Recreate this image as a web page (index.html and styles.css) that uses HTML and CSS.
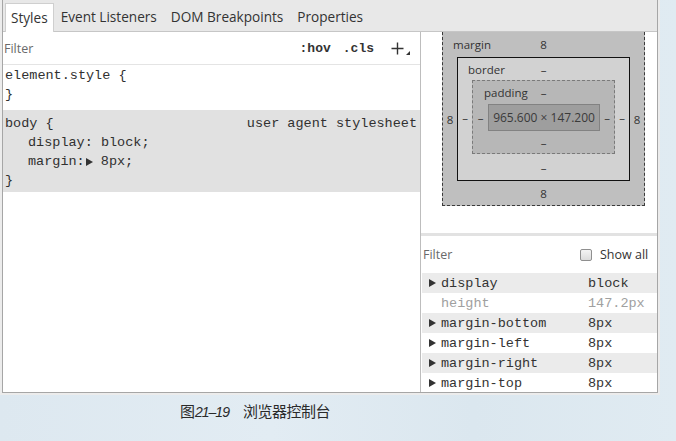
FILE: index.html
```html
<!DOCTYPE html>
<html lang="zh-CN">
<head>
<meta charset="utf-8">
<title>浏览器控制台</title>
<link rel="stylesheet" href="styles.css">
</head>
<body>
<div class="panel">
  <div class="tabs">
    <div class="tab tab-sel">Styles</div>
    <div class="tab">Event Listeners</div>
    <div class="tab">DOM Breakpoints</div>
    <div class="tab">Properties</div>
  </div>
  <div class="main">
    <div class="styles-pane">
      <div class="filter-bar">
        <span class="filter-ph">Filter</span>
        <div class="tools">
          <span class="tool">:hov</span>
          <span class="tool">.cls</span>
          <span class="plus">
            <svg width="13" height="13" viewBox="0 0 13 13"><path d="M6.5 0.5V12.5M0.5 6.5H12.5" stroke="#333" stroke-width="1.4" fill="none"/></svg>
            <span class="corner"></span>
          </span>
        </div>
      </div>
      <div class="rule rule-el">
        <div class="line">element.style {</div>
        <div class="line">}</div>
      </div>
      <div class="rule rule-ua">
        <div class="line head"><span>body {</span><span>user agent stylesheet</span></div>
        <div class="line prop">display: block;</div>
        <div class="line prop">margin:<span class="tri"></span> 8px;</div>
        <div class="line">}</div>
      </div>
    </div>
    <div class="side-pane">
      <div class="bm-wrap">
        <div class="bm bm-margin">
          <div class="bm-top bm-top-m"><span class="bm-label">margin</span><span>8</span><span></span></div>
          <div class="bm-mid">
            <span class="bm-side">8</span>
            <div class="bm bm-border">
              <div class="bm-top bm-top-b"><span class="bm-label">border</span><span>–</span><span></span></div>
              <div class="bm-mid">
                <span class="bm-side">–</span>
                <div class="bm bm-padding">
                  <div class="bm-top bm-top-p"><span class="bm-label">padding</span><span>–</span><span></span></div>
                  <div class="bm-mid">
                    <span class="bm-side bm-side-wide">–</span>
                    <div class="bm-content">965.600 × 147.200</div>
                    <span class="bm-side">–</span>
                  </div>
                  <div class="bm-bot bm-bot-p">–</div>
                </div>
                <span class="bm-side">–</span>
              </div>
              <div class="bm-bot bm-bot-b">–</div>
            </div>
            <span class="bm-side">8</span>
          </div>
          <div class="bm-bot bm-bot-m">8</div>
        </div>
      </div>
      <div class="sep"></div>
      <div class="cfilter">
        <span class="filter-ph">Filter</span>
        <span class="showall"><span class="checkbox"></span>Show all</span>
      </div>
      <div class="computed">
        <div class="crow alt"><span class="ctri"></span><span class="cname">display</span><span class="cval">block</span></div>
        <div class="crow dim"><span class="ctri none"></span><span class="cname">height</span><span class="cval">147.2px</span></div>
        <div class="crow alt"><span class="ctri"></span><span class="cname">margin-bottom</span><span class="cval">8px</span></div>
        <div class="crow"><span class="ctri"></span><span class="cname">margin-left</span><span class="cval">8px</span></div>
        <div class="crow alt"><span class="ctri"></span><span class="cname">margin-right</span><span class="cval">8px</span></div>
        <div class="crow"><span class="ctri"></span><span class="cname">margin-top</span><span class="cval">8px</span></div>
      </div>
    </div>
  </div>
</div>
<div class="caption">图<span class="fig-no">21–19</span><span class="fig-title">浏览器控制台</span></div>
</body>
</html>
```
FILE: styles.css
```css
* { box-sizing: border-box; }
html, body { margin: 0; padding: 0; }
body {
  width: 676px;
  height: 441px;
  overflow: hidden;
  background: linear-gradient(90deg, #dde8f0 0%, #e2ecf3 40%, #dbe7ef 70%, #e0ebf2 100%);
  font-family: "Open Sans", "Noto Sans", sans-serif;
  color: #333;
}
.panel {
  margin-left: 2px;
  width: 656px;
  height: 393px;
  background: #fff;
  border: 1px solid #a6a6a6;
  border-top: none;
  box-shadow: 0 0 0 2px #ececec;
  display: flex;
  flex-direction: column;
  overflow: hidden;
}
.tabs {
  height: 32px;
  flex: none;
  background: #e8e8e8;
  border-bottom: 1px solid #c6c6c6;
  display: flex;
  align-items: flex-end;
  padding-left: 2px;
}
.tab {
  height: 28px;
  padding: 0 7px;
  font-size: 13.6px;
  line-height: 27px;
  color: #333;
  white-space: nowrap;
}
.tab-sel {
  background: #fff;
  border: 1px solid #cfcfcf;
  border-bottom: none;
  padding: 0 5px 0 5px;
  margin-bottom: -1px;
  height: 29px;
}
.main {
  flex: 1;
  display: flex;
  min-height: 0;
}
.styles-pane {
  width: 418px;
  flex: none;
  border-right: 1px solid #bdbdbd;
}
.filter-bar {
  height: 33px;
  border-bottom: 1px solid #e4e4e4;
  display: flex;
  align-items: center;
  justify-content: space-between;
  padding-left: 1px;
}
.filter-ph {
  font-size: 12.5px;
  color: #6a6a6a;
}
.tools {
  display: flex;
  align-items: center;
  font-family: "Liberation Mono", monospace;
  font-weight: bold;
  font-size: 13px;
  color: #333;
}
.tool { margin-right: 12px; }
.tool + .tool { margin-right: 17px; }
.plus {
  display: flex;
  align-items: flex-start;
  width: 29px;
  height: 17px;
  padding-top: 2px;
}
.plus svg { display: block; }
.corner {
  width: 0;
  height: 0;
  border-left: 4px solid transparent;
  border-bottom: 4px solid #333;
  margin-top: 9px;
  margin-left: 2px;
}
.rule {
  font-family: "Liberation Mono", monospace;
  font-size: 13.5px;
  line-height: 19px;
  color: #303030;
  padding-left: 2px;
}
.rule-el {
  padding-top: 1px;
  height: 45px;
}
.rule-ua {
  background: #e1e1e1;
  padding-top: 4px;
  padding-bottom: 2px;
  padding-right: 3px;
}
.line { white-space: pre; }
.head { display: flex; justify-content: space-between; }
.prop { padding-left: 23px; }
.tri {
  display: inline-block;
  width: 0;
  height: 0;
  border-left: 7px solid #333;
  border-top: 4px solid transparent;
  border-bottom: 4px solid transparent;
  margin-left: 1px;
  vertical-align: -1px;
}
.side-pane {
  flex: 1;
  min-width: 0;
  overflow: hidden;
}
.bm-wrap {
  padding-left: 21px;
  height: 201px;
}
.bm {
  display: flex;
  flex-direction: column;
  font-size: 11.5px;
  color: #333;
}
.bm-margin {
  width: 203px;
  background: #bfbfbf;
  border: 1px dashed #3a3a3a;
  border-top: none;
}
.bm-border {
  width: 173px;
  background: #d2d2d2;
  border: 1px solid #111;
}
.bm-padding {
  width: 143px;
  background: #b7b7b7;
  border: 1px dashed #7a7a7a;
}
.bm-top {
  display: grid;
  grid-template-columns: 1fr auto 1fr;
  align-items: center;
}
.bm-label { padding-left: 10px; }
.bm-top-b .bm-label { padding-left: 10px; }
.bm-top-p .bm-label { padding-left: 11px; }
.bm-top-m { height: 25px; }
.bm-top-b { height: 22px; }
.bm-top-p { height: 23px; }
.bm-mid {
  display: flex;
  align-items: center;
}
.bm-side {
  width: 14px;
  text-align: center;
  flex: none;
}
.bm-side-wide { width: 15px; }
.bm-content {
  width: 112px;
  height: 27px;
  background: #9e9e9e;
  border: 1px solid #828282;
  text-align: center;
  line-height: 25px;
  font-size: 12px;
  color: #3a3a3a;
  white-space: nowrap;
}
.bm-bot {
  text-align: center;
  display: flex;
  align-items: center;
  justify-content: center;
}
.bm-bot-p { height: 22px; }
.bm-bot-b { height: 26px; }
.bm-bot-m { height: 24px; }
.sep {
  height: 3px;
  background: #e2e2e2;
}
.cfilter {
  height: 37px;
  display: flex;
  align-items: center;
  padding-left: 2px;
  white-space: nowrap;
}
.cfilter .filter-ph { width: 157px; flex: none; }
.showall {
  display: flex;
  align-items: center;
  font-size: 12.5px;
  color: #333;
}
.checkbox {
  width: 12px;
  height: 12px;
  border: 1px solid #8f8f8f;
  border-radius: 2px;
  background: linear-gradient(#f4f4f4, #dcdcdc);
  margin-right: 8px;
  flex: none;
}
.computed {
  font-family: "Liberation Mono", monospace;
  font-size: 13.5px;
  color: #333;
}
.crow {
  height: 20px;
  display: flex;
  align-items: center;
  padding-left: 7px;
  margin-left: 1px;
  white-space: nowrap;
}
.crow.alt { background: #ebebeb; }
.crow.dim { color: #a0a0a0; }
.ctri {
  width: 0;
  height: 0;
  border-left: 7px solid #333;
  border-top: 4px solid transparent;
  border-bottom: 4px solid transparent;
  margin-right: 5px;
  flex: none;
}
.ctri.none { border-left-color: transparent; }
.cname { width: 147px; flex: none; }
.caption {
  margin-top: 8px;
  padding-left: 180px;
  font-family: "Noto Sans CJK SC", sans-serif;
  font-size: 15px;
  line-height: 20px;
  color: #2a2a2a;
  white-space: nowrap;
}
.fig-no {
  font-family: "Liberation Sans", sans-serif;
  font-style: italic;
  font-size: 14px;
  letter-spacing: -1px;
  margin-right: 14px;
}
.fig-title { letter-spacing: -0.5px; }
```
